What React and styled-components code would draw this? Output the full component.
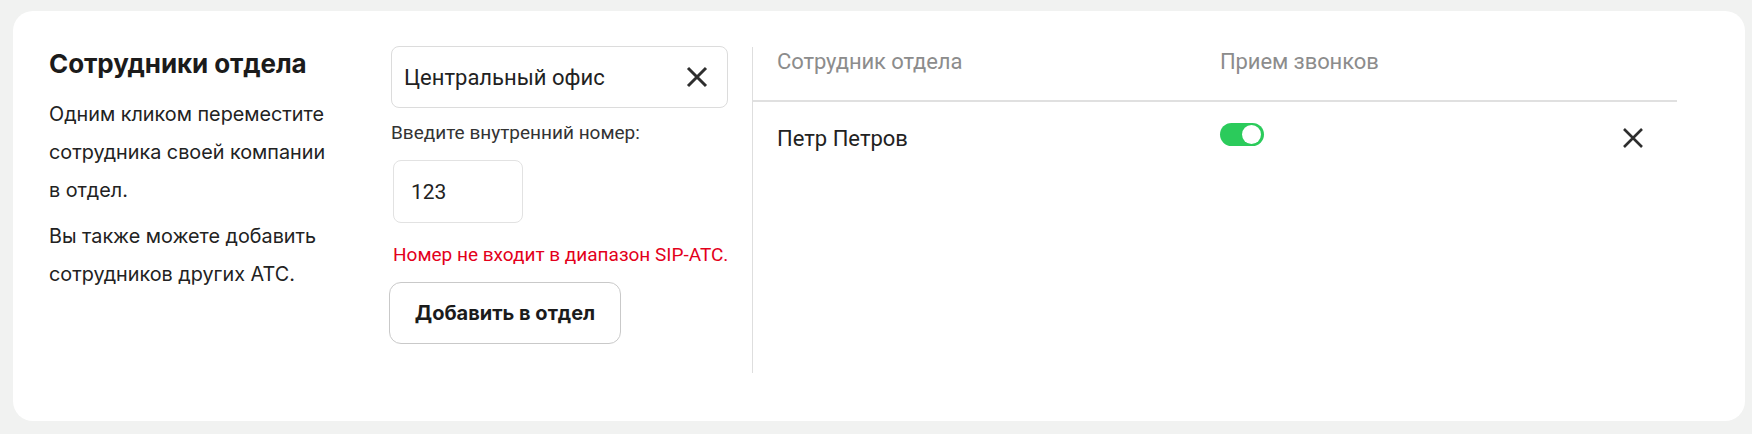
import React, { useState } from "react";
import styled, { createGlobalStyle } from "styled-components";

const GlobalStyle = createGlobalStyle`
  body {
    margin: 0;
    background: #f1f2f1;
    font-family: Roboto, "Liberation Sans", sans-serif;
    color: #222;
  }
`;

const Page = styled.div`
  padding: 11px 7px 13px 13px;
`;

const Card = styled.div`
  display: flex;
  align-items: flex-start;
  background: #fff;
  border-radius: 20px;
  padding: 35px 68px 48px 36px;
`;

const Intro = styled.div`
  flex: none;
  width: 342px;
  font-family: Inter, "Liberation Sans", sans-serif;
`;

const Title = styled.h2`
  margin: 3px 0 0;
  font-size: 26px;
  line-height: 30px;
  font-weight: 700;
  color: #1b1b1b;
  letter-spacing: -0.1px;
`;

const Paragraph = styled.p`
  margin: ${(p) => (p.$first ? "16px" : "8px")} 0 0;
  max-width: 280px;
  font-size: 19.8px;
  line-height: 38px;
  color: #222;
`;

const Form = styled.div`
  flex: none;
  width: 337px;
  display: flex;
  flex-direction: column;
  align-items: flex-start;
`;

const Select = styled.div`
  box-sizing: border-box;
  width: 100%;
  height: 62px;
  display: flex;
  align-items: center;
  justify-content: space-between;
  padding: 0 19px 0 12px;
  border: 1px solid #dcdcdc;
  border-radius: 8px;
  font-size: 22px;
  color: #222;
`;

const IconButton = styled.button`
  display: flex;
  padding: 0;
  margin-top: ${(p) => p.$top || 0}px;
  border: none;
  background: none;
  cursor: pointer;
`;

const Label = styled.div`
  margin-top: 14px;
  font-size: 19px;
  line-height: 22px;
  color: #333;
`;

const NumberInput = styled.input`
  box-sizing: border-box;
  width: 130px;
  height: 63px;
  margin: 16px 0 0 2px;
  padding: 0 0 0 17px;
  border: 1px solid #e2e2e2;
  border-radius: 8px;
  font-family: Roboto, "Liberation Sans", sans-serif;
  font-size: 21px;
  color: #222;
  outline: none;
`;

const ErrorText = styled.div`
  margin: 21px 0 0 2px;
  font-size: 19px;
  line-height: 22px;
  color: #e3001b;
  white-space: nowrap;
`;

const AddButton = styled.button`
  box-sizing: border-box;
  width: 232px;
  height: 62px;
  margin: 16px 0 0 -2px;
  border: 1px solid #c9c9c9;
  border-radius: 12px;
  background: #fff;
  font-family: Inter, "Liberation Sans", sans-serif;
  font-size: 20px;
  font-weight: 700;
  color: #1b1b1b;
  cursor: pointer;
`;

const Table = styled.div`
  flex: 1;
  align-self: stretch;
  margin: 1px 0 0 24px;
  min-height: 326px;
  border-left: 1px solid #dedede;
`;

const Cols = styled.div`
  display: grid;
  grid-template-columns: 443px 1fr 22px;
  align-items: start;
  padding: 0 33px 0 24px;
`;

const Header = styled(Cols)`
  height: 53px;
  border-bottom: 2px solid #e0e0e0;
`;

const HeadCell = styled.div`
  font-size: 22px;
  line-height: 29px;
  color: #8c8c8c;
  letter-spacing: -0.1px;
`;

const Row = styled(Cols)`
  padding-top: 22px;
`;

const Name = styled.div`
  font-size: 22px;
  line-height: 30px;
  color: #222;
`;

const Switch = styled.button`
  position: relative;
  width: 44px;
  height: 23px;
  margin-top: -1px;
  padding: 0;
  border: none;
  border-radius: 12px;
  background: ${(p) => (p.$on ? "#2bcb5b" : "#cfcfcf")};
  cursor: pointer;

  &::after {
    content: "";
    position: absolute;
    top: 2px;
    left: ${(p) => (p.$on ? "22px" : "2px")};
    width: 19px;
    height: 19px;
    border-radius: 50%;
    background: #fff;
  }
`;

const Cross = ({ size = 22, width = 2.6 }) => (
  <svg width={size} height={size} viewBox="0 0 22 22">
    <path d="M2 2 L20 20 M20 2 L2 20" stroke="#2e2e2e" strokeWidth={width} />
  </svg>
);

export default function App() {
  const [on, setOn] = useState(true);
  return (
    <Page>
      <GlobalStyle />
      <Card>
        <Intro>
          <Title>Сотрудники отдела</Title>
          <Paragraph $first>Одним кликом переместите сотрудника своей компании в отдел.</Paragraph>
          <Paragraph>Вы также можете добавить сотрудников других АТС.</Paragraph>
        </Intro>
        <Form>
          <Select>
            <span>Центральный офис</span>
            <IconButton>
              <Cross width={3} />
            </IconButton>
          </Select>
          <Label>Введите внутренний номер:</Label>
          <NumberInput defaultValue="123" />
          <ErrorText>Номер не входит в диапазон SIP-АТС.</ErrorText>
          <AddButton>Добавить в отдел</AddButton>
        </Form>
        <Table>
          <Header>
            <HeadCell>Сотрудник отдела</HeadCell>
            <HeadCell>Прием звонков</HeadCell>
          </Header>
          <Row>
            <Name>Петр Петров</Name>
            <Switch $on={on} onClick={() => setOn(!on)} />
            <IconButton $top={3}>
              <Cross />
            </IconButton>
          </Row>
        </Table>
      </Card>
    </Page>
  );
}
